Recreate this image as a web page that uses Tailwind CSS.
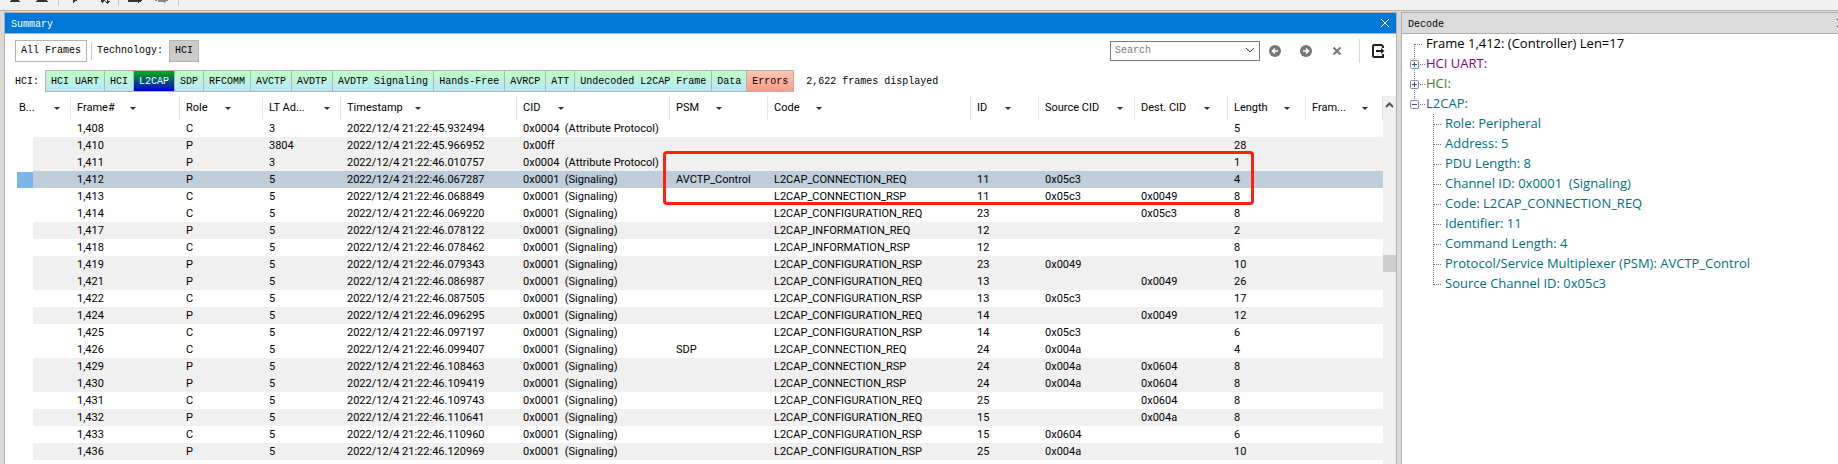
<!DOCTYPE html>
<html lang="en">
<head>
<meta charset="utf-8">
<title>Frame Display</title>
<script src="https://cdn.jsdelivr.net/npm/@tailwindcss/browser@4"></script>
</head>
<body class="flex h-screen flex-col overflow-hidden bg-[#f0f0f0] font-['Roboto',sans-serif] text-[11px] text-black">
<header class="h-[11px] shrink-0 overflow-hidden border-b border-[#b4b4b4]">
  <svg width="190" height="10" viewBox="0 0 190 10" fill="#333" aria-hidden="true">
    <path d="M11 0h8v1h1v1H10V1h1zM37 0h10v1h1v1H36V1h1zM73 0h4v1h-2v1h-1v1h-1z"/>
    <path d="M101 0h4v1h1v1h1V0h1v1h2v1h-1v1h-1v1h-1V3h-1V2h-1V1h-1v1h-1v1h-1V2h-1z"/>
    <path d="M128 0h11v2h-11zM139 0h3v1h-1v1h-2v1h-1V2h1z"/>
    <path d="M155 0h2v1h-2zM158 0h8v2h-1v1h-1V2h-6zM166 0h2v1h-2z" fill="#888"/>
    <path d="M58 0h1v6h-1zM118 0h1v6h-1zM178 0h1v6h-1z" fill="#c4c4c4"/>
  </svg>
</header>
<main class="grid min-h-0 flex-1 grid-cols-[minmax(0,1fr)_437px] gap-1 bg-[#dadada] pt-px">
  <section class="flex min-w-0 flex-col overflow-hidden border border-b-0 border-[#b0b0b0] bg-white ml-1">
    <div class="flex h-[21px] shrink-0 items-center justify-between border-b border-[#b0b0b0] bg-[#0078d7] px-1.5 text-white">
      <h1 class="pt-0.5 font-['Liberation_Mono',monospace] text-[10px]">Summary</h1>
      <button aria-label="Close summary"><svg width="10" height="10" viewBox="0 0 10 10" stroke="#fff" fill="none"><path d="M1 1l8 8M9 1L1 9"/></svg></button>
    </div>
    <div class="flex h-[33px] shrink-0 items-center font-['Liberation_Mono',monospace] text-[10px]">
      <button class="ml-2.5 h-[22px] w-[72px] border border-[#b4b4b4] bg-[#fdfdfd]">All Frames</button>
      <span class="mx-1 h-[18px] w-px bg-[#c8c8c8]"></span>
      <span class="ml-px">Technology:</span>
      <button class="ml-1.5 h-[22px] w-[30px] border border-[#b4b4b4] bg-[#cccccc]">HCI</button>
      <div class="ml-auto flex h-5 w-[150px] items-center border border-[#7a7a7a] bg-white">
        <input aria-label="Search" placeholder="Search" class="min-w-0 flex-1 pl-1 outline-none placeholder:text-[#777]">
        <button aria-label="Search history" class="mr-1"><svg width="10" height="7" viewBox="0 0 10 7" fill="none" stroke="#444"><path d="M1 1l4 4 4-4"/></svg></button>
      </div>
      <button aria-label="Previous match" class="ml-[9px]"><svg width="12" height="12" viewBox="0 0 12 12"><circle cx="6" cy="6" r="6" fill="#777"/><path d="M9 6H4M6 3.500L3.500 6 6 8.500" fill="none" stroke="#fff" stroke-width="1.600"/></svg></button>
      <button aria-label="Next match" class="ml-[19px]"><svg width="12" height="12" viewBox="0 0 12 12"><circle cx="6" cy="6" r="6" fill="#777"/><path d="M3 6h5M6 3.500L8.500 6 6 8.500" fill="none" stroke="#fff" stroke-width="1.600"/></svg></button>
      <button aria-label="Clear search" class="ml-5"><svg width="10" height="10" viewBox="0 0 10 10" fill="none" stroke="#777" stroke-width="2"><path d="M1.500 1.500l7 7M8.500 1.500l-7 7"/></svg></button>
      <span class="ml-[17px] h-6 w-px bg-[#d8d8d8]"></span>
      <button aria-label="Export" class="mr-[11px] ml-3"><svg width="13" height="14" viewBox="0 0 13 14" fill="none" stroke="#222" stroke-width="2"><path d="M11 4V2.500L9.500 1H2L1 2v10l1 1h9v-3"/><path d="M4 7h7" /><path d="M9 4l3.500 3L9 10z" fill="#222" stroke="none"/></svg></button>
    </div>
    <div class="mb-px flex h-7 shrink-0 items-center pl-2.5 font-['Liberation_Mono',monospace] text-[10px]">
      <span class="w-[30px]">HCI:</span>
      <nav id="protocols" aria-label="Protocols" class="flex h-[22px] divide-x divide-[#b4b4b4] border border-[#b4b4b4]"></nav>
      <span class="ml-3">2,622 frames displayed</span>
    </div>
    <div class="flex min-h-0 flex-1">
      <div class="relative min-w-0 flex-1 overflow-hidden">
        <table class="w-full table-fixed border-collapse">
          <colgroup>
            <col class="w-[28px]"><col class="w-[38px]"><col class="w-[109px]"><col class="w-[83px]"><col class="w-[78px]"><col class="w-[176px]"><col class="w-[153px]"><col class="w-[98px]"><col class="w-[203px]"><col class="w-[68px]"><col class="w-[96px]"><col class="w-[93px]"><col class="w-[78px]"><col>
          </colgroup>
          <thead><tr id="head" class="h-6"></tr></thead>
          <tbody id="rows"></tbody>
        </table>
        <div class="pointer-events-none absolute top-[55px] left-[658px] h-[54px] w-[591px] rounded-[4px] border-3 border-[#ff2010]"></div>
      </div>
      <div class="flex w-[13px] shrink-0 flex-col items-center bg-[#f0f0f0] pt-1.5">
        <svg width="9" height="6" viewBox="0 0 9 6" fill="none" stroke="#555" stroke-width="2"><path d="M1 5l3.500-3.500L8 5"/></svg>
        <div class="mt-[147px] h-[17px] w-full bg-[#cdcdcd]"></div>
      </div>
    </div>
  </section>
  <aside class="flex min-w-0 flex-col border-t border-l border-[#b0b0b0] bg-white">
    <div class="flex h-[21px] shrink-0 items-center justify-between overflow-hidden border-b border-[#b0b0b0] bg-[#dadada] pl-1.5">
      <h2 class="pt-0.5 font-['Liberation_Mono',monospace] text-[10px]">Decode</h2>
      <button aria-label="Close decode" class="-mr-2"><svg width="10" height="10" viewBox="0 0 10 10" stroke="#222" fill="none"><path d="M1 1l8 8M9 1L1 9"/></svg></button>
    </div>
    <ul id="tree" class="pl-2 font-['Open_Sans',sans-serif] text-[13px] leading-[18px]"></ul>
  </aside>
</main>
<script>
const protocols = ['HCI UART','HCI','L2CAP','SDP','RFCOMM','AVCTP','AVDTP','AVDTP Signaling','Hands-Free','AVRCP','ATT','Undecoded L2CAP Frame','Data','Errors'];
document.getElementById('protocols').innerHTML = protocols.map(p => {
  const tone = p === 'L2CAP' ? 'bg-linear-to-b/srgb from-[#00b010] to-[#0000d8] text-white'
    : p === 'Errors' ? 'bg-linear-to-b/srgb from-[#ffc4b4] to-[#ff9c88]' : 'bg-linear-to-b/srgb from-[#bfffc4] to-[#b8e8fa]';
  return `<button class="px-[5px] whitespace-pre ${tone}">${p}</button>`;
}).join('');

// Column title and the width kept for it before the sort arrow
const columns = [['B...','w-[35px]'],['Frame#','w-[53px]'],['Role','w-[39px]'],['LT Ad...','w-[55px]'],['Timestamp','w-[68px]'],['CID','w-[35px]'],['PSM','w-[40px]'],['Code','w-[42px]'],['ID','w-[28px]'],['Source CID','w-[72px]'],['Dest. CID','w-[63px]'],['Length','w-[50px]'],['Fram...','w-[50px]']];
document.getElementById('head').innerHTML = columns.map(([t, w], i) =>
  `<th ${i ? '' : 'colspan="2"'} class="p-0 text-left font-normal"><button class="flex h-6 w-full items-center border-r border-[#e2e2e2] text-left ${i ? 'pl-1.5' : 'pl-3.5'}"><span class="${w}">${t}</span><svg width="6" height="3" viewBox="0 0 6 3" fill="#333"><path d="M0 0h6L3 3z"/></svg></button></th>`).join('');

const A = '0x0004  (Attribute Protocol)', S = '0x0001  (Signaling)', T = '2022/12/4 21:22:';
const N = 'L2CAP_CONNECTION_', F = 'L2CAP_CONFIGURATION_', I = 'L2CAP_INFORMATION_';
const frames = [
  ['1,408','C','3','45.932494',A,'','','','','','5'],
  ['1,410','P','3804','45.966952','0x00ff','','','','','','28'],
  ['1,411','P','3','46.010757',A,'','','','','','1'],
  ['1,412','P','5','46.067287',S,'AVCTP_Control',N+'REQ','11','0x05c3','','4'],
  ['1,413','C','5','46.068849',S,'',N+'RSP','11','0x05c3','0x0049','8'],
  ['1,414','C','5','46.069220',S,'',F+'REQ','23','','0x05c3','8'],
  ['1,417','P','5','46.078122',S,'',I+'REQ','12','','','2'],
  ['1,418','C','5','46.078462',S,'',I+'RSP','12','','','8'],
  ['1,419','P','5','46.079343',S,'',F+'RSP','23','0x0049','','10'],
  ['1,421','P','5','46.086987',S,'',F+'REQ','13','','0x0049','26'],
  ['1,422','C','5','46.087505',S,'',F+'RSP','13','0x05c3','','17'],
  ['1,424','P','5','46.096295',S,'',F+'REQ','14','','0x0049','12'],
  ['1,425','C','5','46.097197',S,'',F+'RSP','14','0x05c3','','6'],
  ['1,426','C','5','46.099407',S,'SDP',N+'REQ','24','0x004a','','4'],
  ['1,429','P','5','46.108463',S,'',N+'RSP','24','0x004a','0x0604','8'],
  ['1,430','P','5','46.109419',S,'',N+'RSP','24','0x004a','0x0604','8'],
  ['1,431','C','5','46.109743',S,'',F+'REQ','25','','0x0604','8'],
  ['1,432','P','5','46.110641',S,'',F+'REQ','15','','0x004a','8'],
  ['1,433','C','5','46.110960',S,'',F+'RSP','15','0x0604','','6'],
  ['1,436','P','5','46.120969',S,'',F+'RSP','25','0x004a','','10'],
];
document.getElementById('rows').innerHTML = frames.map(f => {
  const selected = f[0] === '1,412';
  const bg = selected ? 'bg-[#bfccda]' : f[1] === 'P' ? 'bg-[#f0f0f0]' : 'bg-white';
  const cells = ['', ...f, ''].map((v, i) => `<td class="h-[17px] py-0 pr-0 pl-1.5 leading-[17px] whitespace-pre ${bg}">${i === 4 ? T + v : v}</td>`).join('');
  return `<tr><td class="py-0 pr-0 pl-3">${selected ? '<div class="h-4 bg-[#7cb4e8]"></div>' : ''}</td>${cells}</tr>`;
}).join('');

const box = open => `<svg class="shrink-0" width="15" height="20" viewBox="0 0 15 20" fill="none"><path d="M4.500 0v20M10 10.500h5" stroke="#777" stroke-dasharray="1 1"/>${open ? '<path d="M3 11h3v9H3z" fill="#fff"/>' : ''}<rect x=".5" y="6.500" width="8" height="8" rx="1" fill="#f6f6f6" stroke="#8c8c8c"/><path d="${open ? 'M2 10.500h5' : 'M2 10.500h5M4.500 8v5'}" stroke="#3050a0"/></svg>`;
const top1 = '<svg class="shrink-0" width="15" height="20" viewBox="0 0 15 20" fill="none"><path d="M4.500 10v10M5 10.500h8" stroke="#777" stroke-dasharray="1 1"/></svg>';
const leaf = last => `<svg class="shrink-0" width="15" height="20" viewBox="0 0 15 20" fill="none"><path d="${last ? 'M4.500 0v11M5 10.500h8' : 'M4.500 0v20M5 10.500h8'}" stroke="#777" stroke-dasharray="1 1"/></svg>`;
const item = (icon, text, tone) => `<li class="flex h-5 items-start gap-px whitespace-pre ${tone}">${icon}<span>${text}</span></li>`;
const details = ['Role: Peripheral','Address: 5','PDU Length: 8','Channel ID: 0x0001  (Signaling)','Code: L2CAP_CONNECTION_REQ','Identifier: 11','Command Length: 4','Protocol/Service Multiplexer (PSM): AVCTP_Control','Source Channel ID: 0x05c3'];
document.getElementById('tree').innerHTML =
  item(top1, 'Frame 1,412: (Controller) Len=17', 'text-black') + item(box(false), 'HCI UART:', 'text-[#800080]') +
  item(box(false), 'HCI:', 'text-[#3c8020]') + item(box(true), 'L2CAP:', 'text-[#007080]') +
  `<li><ul class="pl-[19px]">${details.map((d, i) => item(leaf(i === details.length - 1), d, 'text-[#007080]')).join('')}</ul></li>`;
</script>
</body>
</html>
